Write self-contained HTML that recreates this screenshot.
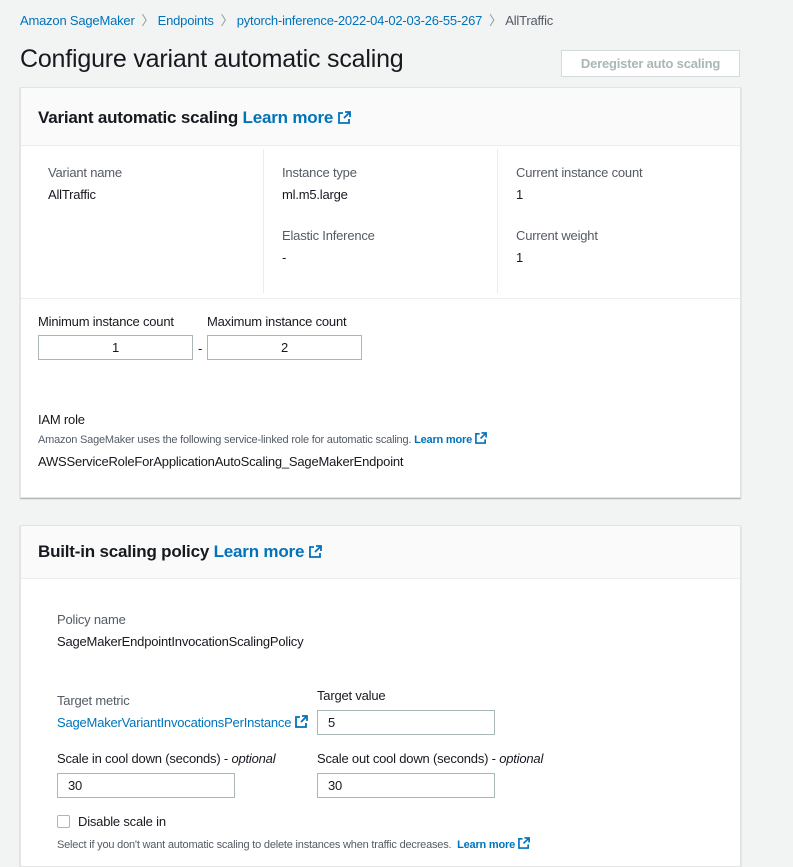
<!DOCTYPE html>
<html><head><style>
body{margin:0;width:793px;height:854px;background:#f2f3f3;font-family:"Liberation Sans",sans-serif;color:#16191f;position:relative;overflow:hidden;font-size:13px;letter-spacing:-0.2px}
.a{position:absolute;white-space:nowrap}
.l{color:#0073bb}
.p{position:absolute;left:20px;width:719px;background:#fff;border:1px solid #e3e3e3;box-shadow:0 1px 1px rgba(0,0,0,.3)}
.h{position:absolute;left:0;top:0;right:0;background:#fafafa;border-bottom:1px solid #eaeded}
.in{position:absolute;height:25px;border:1px solid #aab7b8;background:#fff;box-sizing:border-box;font-size:13px;line-height:24px}
.g{color:#545b64}
.sep{color:#879596}
svg{vertical-align:-1px}
</style></head><body>
<div class="a" style="left:20px;top:10px"><span class="l">Amazon SageMaker</span> <span class="sep">&nbsp;〉&nbsp;</span><span class="l">Endpoints</span><span class="sep">&nbsp;&nbsp;〉&nbsp;</span><span class="l">pytorch-inference-2022-04-02-03-26-55-267</span><span class="sep">&nbsp;&nbsp;〉&nbsp;</span><span class="g">AllTraffic</span></div>
<div class="a" style="left:20px;top:45px;font-size:25px">Configure variant automatic scaling</div>
<div class="a" style="left:561px;top:50px;width:177px;height:25px;border:1px solid #d5dbdb;background:#fff;color:#aab7b8;font-weight:bold;text-align:center;line-height:25px;font-size:13px">Deregister auto scaling</div>

<div class="p" style="top:87px;height:409px">
 <div class="h" style="height:57px"></div>
 <div class="a" style="left:17px;top:20px;font-size:17px;font-weight:bold">Variant automatic scaling <span class="l">Learn more <svg width="13" height="13" viewBox="0 0 13 13"><path d="M7 1h5v5M12 1L6 7M5 2H1v10h10V8" fill="none" stroke="#0073bb" stroke-width="1.8"/></svg></span></div>
 <div style="position:absolute;left:242px;top:61px;width:1px;height:144px;background:#eaeded"></div>
 <div style="position:absolute;left:476px;top:61px;width:1px;height:144px;background:#eaeded"></div>
 <div style="position:absolute;left:0;right:0;top:210px;height:1px;background:#eaeded"></div>
 <div class="a g" style="left:27px;top:77px">Variant name</div><div class="a" style="left:27px;top:99px">AllTraffic</div>
 <div class="a g" style="left:261px;top:77px">Instance type</div><div class="a" style="left:261px;top:99px">ml.m5.large</div>
 <div class="a g" style="left:261px;top:140px">Elastic Inference</div><div class="a" style="left:261px;top:162px">-</div>
 <div class="a g" style="left:495px;top:77px">Current instance count</div><div class="a" style="left:495px;top:99px">1</div>
 <div class="a g" style="left:495px;top:140px">Current weight</div><div class="a" style="left:495px;top:162px">1</div>
 <div class="a" style="left:17px;top:226px">Minimum instance count</div>
 <div class="a" style="left:186px;top:226px">Maximum instance count</div>
 <div class="in" style="left:17px;top:247px;width:155px;text-align:center">1</div>
 <div class="a" style="left:177px;top:253px">-</div>
 <div class="in" style="left:186px;top:247px;width:155px;text-align:center">2</div>
 <div class="a" style="left:17px;top:324px">IAM role</div>
 <div class="a g" style="left:17px;top:344px;font-size:11px">Amazon SageMaker uses the following service-linked role for automatic scaling. <b class="l">Learn more <svg width="12" height="12" viewBox="0 0 13 13"><path d="M7 1h5v5M12 1L6 7M5 2H1v10h10V8" fill="none" stroke="#0073bb" stroke-width="1.8"/></svg></b></div>
 <div class="a" style="left:17px;top:366px">AWSServiceRoleForApplicationAutoScaling_SageMakerEndpoint</div>
</div>

<div class="p" style="top:525px;height:340px">
 <div class="h" style="height:52px"></div>
 <div class="a" style="left:17px;top:16px;font-size:17px;font-weight:bold">Built-in scaling policy <span class="l">Learn more <svg width="13" height="13" viewBox="0 0 13 13"><path d="M7 1h5v5M12 1L6 7M5 2H1v10h10V8" fill="none" stroke="#0073bb" stroke-width="1.8"/></svg></span></div>
 <div class="a g" style="left:36px;top:86px">Policy name</div>
 <div class="a" style="left:36px;top:108px">SageMakerEndpointInvocationScalingPolicy</div>
 <div class="a g" style="left:36px;top:167px">Target metric</div>
 <div class="a l" style="left:36px;top:189px">SageMakerVariantInvocationsPerInstance <svg width="13" height="13" viewBox="0 0 13 13"><path d="M7 1h5v5M12 1L6 7M5 2H1v10h10V8" fill="none" stroke="#0073bb" stroke-width="1.8"/></svg></div>
 <div class="a" style="left:296px;top:162px">Target value</div>
 <div class="in" style="left:296px;top:184px;width:178px;padding-left:10px">5</div>
 <div class="a" style="left:36px;top:225px">Scale in cool down (seconds) - <i>optional</i></div>
 <div class="in" style="left:36px;top:247px;width:178px;padding-left:10px">30</div>
 <div class="a" style="left:296px;top:225px">Scale out cool down (seconds) - <i>optional</i></div>
 <div class="in" style="left:296px;top:247px;width:178px;padding-left:10px">30</div>
 <div style="position:absolute;left:36px;top:289px;width:11px;height:11px;border:1px solid #aab7b8;border-radius:2px"></div>
 <div class="a" style="left:57px;top:288px">Disable scale in</div>
 <div class="a g" style="left:36px;top:311px;font-size:11px">Select if you don't want automatic scaling to delete instances when traffic decreases. &nbsp;<b class="l">Learn more <svg width="12" height="12" viewBox="0 0 13 13"><path d="M7 1h5v5M12 1L6 7M5 2H1v10h10V8" fill="none" stroke="#0073bb" stroke-width="1.8"/></svg></b></div>
</div>
</body></html>
